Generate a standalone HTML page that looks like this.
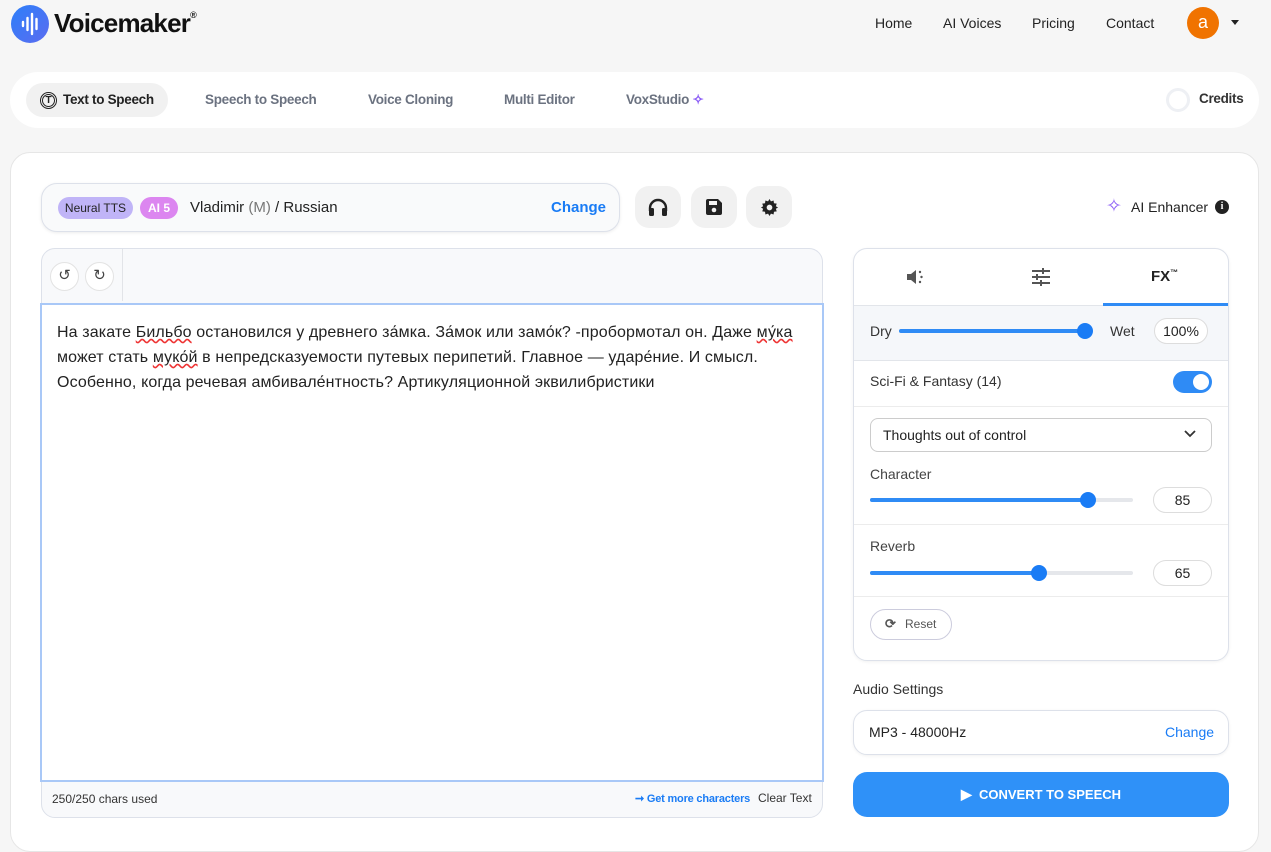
<!DOCTYPE html>
<html><head><meta charset="utf-8"><style>
*{box-sizing:border-box;margin:0;padding:0}
body{width:1271px;height:836px;background:#f6f6f6;font-family:"Liberation Sans",sans-serif;position:relative;overflow:hidden;color:#222}
.a{position:absolute}
.nav{font-size:14px;color:#222}
.tab{font-size:13.5px;color:#6b7280;font-weight:bold;letter-spacing:-0.3px}
.card{background:#fff}
.sl{position:absolute;height:4px;border-radius:2px;background:#e5e7eb}
.sl i{position:absolute;left:0;top:0;height:4px;border-radius:2px;background:#2f8bf5}
.sl b{position:absolute;top:-6px;width:16px;height:16px;border-radius:50%;background:#1a7cf5}
.num{position:absolute;border:1px solid #ddd;border-radius:14px;background:#fff;font-size:14px;text-align:center;line-height:24px;height:26px}
.sq{position:absolute;width:46px;height:42px;border-radius:14px;background:#f1f1f1;display:flex;align-items:center;justify-content:center}
</style></head><body>
<div class="a" style="left:11px;top:5px;width:38px;height:38px;border-radius:50%;background:linear-gradient(135deg,#2d7ff9,#5b6cf0)">
<svg width="38" height="38" viewBox="0 0 38 38"><g stroke="#fff" stroke-width="2.4" stroke-linecap="round"><line x1="12" y1="17" x2="12" y2="21"/><line x1="16.5" y1="13" x2="16.5" y2="25"/><line x1="21" y1="9" x2="21" y2="29"/><line x1="25.5" y1="14" x2="25.5" y2="24"/></g></svg></div>
<div class="a" style="left:54px;top:8px;font-size:26px;font-weight:bold;letter-spacing:-0.8px;color:#111">Voicemaker<sup style="font-size:9px;vertical-align:14px">®</sup></div>
<div class="a nav" style="left:875px;top:15px">Home</div>
<div class="a nav" style="left:943px;top:15px">AI Voices</div>
<div class="a nav" style="left:1032px;top:15px">Pricing</div>
<div class="a nav" style="left:1106px;top:15px">Contact</div>
<div class="a" style="left:1187px;top:7px;width:32px;height:32px;border-radius:50%;background:#f07300;color:#fff;font-size:18px;text-align:center;line-height:30px">a</div>
<div class="a" style="left:1231px;top:20px;border-left:4px solid transparent;border-right:4px solid transparent;border-top:5px solid #222"></div>
<div class="a card" style="left:10px;top:72px;width:1249px;height:56px;border-radius:28px"></div>
<div class="a" style="left:26px;top:83px;width:142px;height:34px;border-radius:17px;background:#f1f1f1"></div>
<div class="a" style="left:40px;top:92px;width:17px;height:17px;border-radius:50%;border:1.5px solid #222;font-size:10px;font-weight:bold;text-align:center;line-height:14px"><span style="display:inline-block;border:1px solid #222;border-radius:50%;width:13px;height:13px;line-height:11px;margin-top:0.5px">T</span></div>
<div class="a" style="left:63px;top:92px;font-size:13.5px;font-weight:bold;color:#222;letter-spacing:-0.3px">Text to Speech</div>
<div class="a tab" style="left:205px;top:92px">Speech to Speech</div>
<div class="a tab" style="left:368px;top:92px">Voice Cloning</div>
<div class="a tab" style="left:504px;top:92px">Multi Editor</div>
<div class="a tab" style="left:626px;top:92px">VoxStudio <span style="color:#8b5cf6">✧</span></div>
<div class="a" style="left:1166px;top:88px;width:24px;height:24px;border-radius:50%;border:3px solid #eef0f4"></div>
<div class="a" style="left:1199px;top:91px;font-size:13.5px;font-weight:bold;color:#333;letter-spacing:-0.3px">Credits</div>
<div class="a card" style="left:10px;top:152px;width:1249px;height:700px;border-radius:20px;border:1px solid #e6e6e6"></div>
<div class="a" style="left:41px;top:183px;width:579px;height:49px;border-radius:16px;background:#f9fafb;border:1px solid #dde1ea;box-shadow:0 1px 3px rgba(0,0,0,.08)"></div>
<div class="a" style="left:58px;top:197px;width:75px;height:22px;border-radius:11px;background:#c0b4f7;font-size:12px;text-align:center;line-height:22px;color:#222">Neural TTS</div>
<div class="a" style="left:140px;top:197px;width:38px;height:22px;border-radius:11px;background:#dc86f0;font-size:12px;text-align:center;line-height:22px;color:#fff;font-weight:bold">AI 5</div>
<div class="a" style="left:190px;top:199px;font-size:15px;color:#222">Vladimir <span style="color:#777">(M)</span> / Russian</div>
<div class="a" style="left:551px;top:199px;font-size:15px;color:#1a7cf5;font-weight:bold">Change</div>
<div class="sq" style="left:635px;top:186px"><svg width="20" height="18" viewBox="0 0 20 18"><path d="M2 13V10a8 8 0 0 1 16 0v3" fill="none" stroke="#222" stroke-width="2.4"/><rect x="1" y="10" width="5" height="8" rx="1.5" fill="#222"/><rect x="14" y="10" width="5" height="8" rx="1.5" fill="#222"/></svg></div>
<div class="sq" style="left:691px;top:186px"><svg width="18" height="18" viewBox="0 0 18 18"><path d="M1 3a2 2 0 0 1 2-2h10l4 4v10a2 2 0 0 1-2 2H3a2 2 0 0 1-2-2z" fill="#222"/><rect x="4" y="3" width="8" height="4" fill="#f1f1f1"/><circle cx="9" cy="12" r="2.3" fill="#f1f1f1"/></svg></div>
<div class="sq" style="left:746px;top:186px"><svg width="19" height="19" viewBox="0 0 20 20"><path d="M10 1l1.5 2.5 2.8-.9.4 2.9 2.9.4-.9 2.8L19 10l-2.3 1.3.9 2.8-2.9.4-.4 2.9-2.8-.9L10 19l-1.5-2.5-2.8.9-.4-2.9-2.9-.4.9-2.8L1 10l2.3-1.3-.9-2.8 2.9-.4.4-2.9 2.8.9z" fill="#222"/><circle cx="10" cy="10" r="3" fill="#f1f1f1"/></svg></div>
<div class="a" style="left:1106px;top:195px;font-size:19px;color:#8b5cf6">✧</div>
<div class="a" style="left:1131px;top:199px;font-size:14px;color:#222">AI Enhancer</div>
<div class="a" style="left:1215px;top:200px;width:14px;height:14px;border-radius:50%;background:#222;color:#fff;font-size:10px;font-weight:bold;text-align:center;line-height:14px;font-family:'Liberation Serif',serif">i</div>
<div class="a" style="left:41px;top:248px;width:782px;height:570px;border-radius:14px;background:#f8f9fb;border:1px solid #dde1ea"></div>
<div class="a" style="left:122px;top:249px;width:1px;height:52px;background:#e2e4e8"></div>
<div class="a" style="left:50px;top:262px;width:29px;height:29px;border-radius:50%;background:#fff;border:1px solid #e3e3e3;font-size:15px;text-align:center;line-height:26px;color:#444">↺</div>
<div class="a" style="left:85px;top:262px;width:29px;height:29px;border-radius:50%;background:#fff;border:1px solid #e3e3e3;font-size:15px;text-align:center;line-height:26px;color:#444">↻</div>
<div class="a" style="left:40px;top:303px;width:784px;height:479px;background:#fff;border:2px solid #a9c8f7"></div>
<div class="a" style="left:57px;top:320px;width:760px;font-size:16px;line-height:25px;color:#222;letter-spacing:0.12px">На закате <u style="text-decoration:underline wavy #e33">Бильбо</u> остановился у древнего за́мка. За́мок или замо́к? -пробормотал он. Даже <u style="text-decoration:underline wavy #e33">му́ка</u> может стать <u style="text-decoration:underline wavy #e33">муко́й</u> в непредсказуемости путевых перипетий. Главное — ударе́ние. И смысл. Особенно, когда речевая амбивале́нтность? Артикуляционной эквилибристики</div>
<div class="a" style="left:52px;top:792px;font-size:12px;color:#333">250/250 chars used</div>
<div class="a" style="left:635px;top:792px;font-size:11px;color:#1a7cf5;font-weight:bold;letter-spacing:-0.2px">➞ Get more characters</div>
<div class="a" style="left:758px;top:791px;font-size:12px;color:#333">Clear Text</div>
<div class="a" style="left:853px;top:248px;width:376px;height:413px;border-radius:14px;background:#fff;border:1px solid #dde1ea;box-shadow:0 1px 3px rgba(0,0,0,.06);overflow:hidden">
 <div class="a" style="left:0;top:56px;width:376px;height:56px;background:#f5f7fa;border-top:1px solid #e2e5ea;border-bottom:1px solid #e2e5ea"></div>
 <div class="a" style="left:249px;top:54px;width:125px;height:3px;background:#2f8bf5"></div>
 <div class="a" style="left:0;top:157px;width:376px;height:1px;background:#ececec"></div>
 <div class="a" style="left:0;top:275px;width:376px;height:1px;background:#ececec"></div>
 <div class="a" style="left:0;top:347px;width:376px;height:1px;background:#ececec"></div>
</div>
<svg class="a" style="left:906px;top:268px" width="20" height="18" viewBox="0 0 20 18"><path d="M1 6h4l5-4v14l-5-4H1z" fill="#555"/><circle cx="14" cy="4" r="1.2" fill="#555"/><circle cx="15.5" cy="9" r="1.2" fill="#555"/><circle cx="14" cy="14" r="1.2" fill="#555"/></svg>
<svg class="a" style="left:1031px;top:268px" width="20" height="18" viewBox="0 0 20 18"><g stroke="#555" stroke-width="2"><line x1="1" y1="3" x2="19" y2="3"/><line x1="1" y1="9" x2="19" y2="9"/><line x1="1" y1="15" x2="19" y2="15"/></g><g stroke="#555" stroke-width="2"><line x1="12" y1="0" x2="12" y2="6"/><line x1="6" y1="6" x2="6" y2="12"/><line x1="10" y1="12" x2="10" y2="18"/></g></svg>
<div class="a" style="left:1151px;top:268px;font-size:15px;font-weight:bold;color:#222">FX<sup style="font-size:8px">™</sup></div>
<div class="a" style="left:870px;top:323px;font-size:14px;color:#333">Dry</div>
<div class="sl" style="left:899px;top:329px;width:189px"><i style="width:189px"></i><b style="left:178px"></b></div>
<div class="a" style="left:1110px;top:323px;font-size:14px;color:#333">Wet</div>
<div class="num" style="left:1154px;top:318px;width:54px">100%</div>
<div class="a" style="left:870px;top:373px;font-size:14px;color:#333">Sci-Fi &amp; Fantasy (14)</div>
<div class="a" style="left:1173px;top:371px;width:39px;height:22px;border-radius:11px;background:#2f8bf5"><div class="a" style="left:20px;top:3px;width:16px;height:16px;border-radius:50%;background:#fff"></div></div>
<div class="a" style="left:870px;top:418px;width:342px;height:34px;border:1px solid #ccc;border-radius:8px;font-size:14px;line-height:32px;padding-left:12px;color:#222">Thoughts out of control</div>
<svg class="a" style="left:1184px;top:430px" width="12" height="8" viewBox="0 0 12 8"><path d="M1 1l5 5 5-5" fill="none" stroke="#333" stroke-width="1.8"/></svg>
<div class="a" style="left:870px;top:466px;font-size:14px;color:#444">Character</div>
<div class="sl" style="left:870px;top:498px;width:263px"><i style="width:218px"></i><b style="left:210px"></b></div>
<div class="num" style="left:1153px;top:487px;width:59px">85</div>
<div class="a" style="left:870px;top:538px;font-size:14px;color:#444">Reverb</div>
<div class="sl" style="left:870px;top:571px;width:263px"><i style="width:169px"></i><b style="left:161px"></b></div>
<div class="num" style="left:1153px;top:560px;width:59px">65</div>
<div class="a" style="left:870px;top:609px;width:82px;height:31px;border-radius:16px;border:1px solid #ccd;font-size:12px;color:#555;line-height:29px;padding-left:34px">Reset</div>
<div class="a" style="left:885px;top:616px;font-size:13px;color:#555;font-weight:bold">⟳</div>
<div class="a" style="left:853px;top:681px;font-size:14px;color:#333">Audio Settings</div>
<div class="a" style="left:853px;top:710px;width:376px;height:45px;border-radius:14px;background:#fff;border:1px solid #dde1ea;box-shadow:0 1px 3px rgba(0,0,0,.06)"></div>
<div class="a" style="left:869px;top:724px;font-size:14px;color:#222">MP3 - 48000Hz</div>
<div class="a" style="left:1165px;top:724px;font-size:14px;color:#1a7cf5">Change</div>
<div class="a" style="left:853px;top:772px;width:376px;height:45px;border-radius:14px;background:#2f91f8;color:#fff;font-weight:bold;font-size:13px;text-align:center;line-height:45px"><span style="font-size:14px">▶</span>&nbsp; CONVERT TO SPEECH</div>
</body></html>
